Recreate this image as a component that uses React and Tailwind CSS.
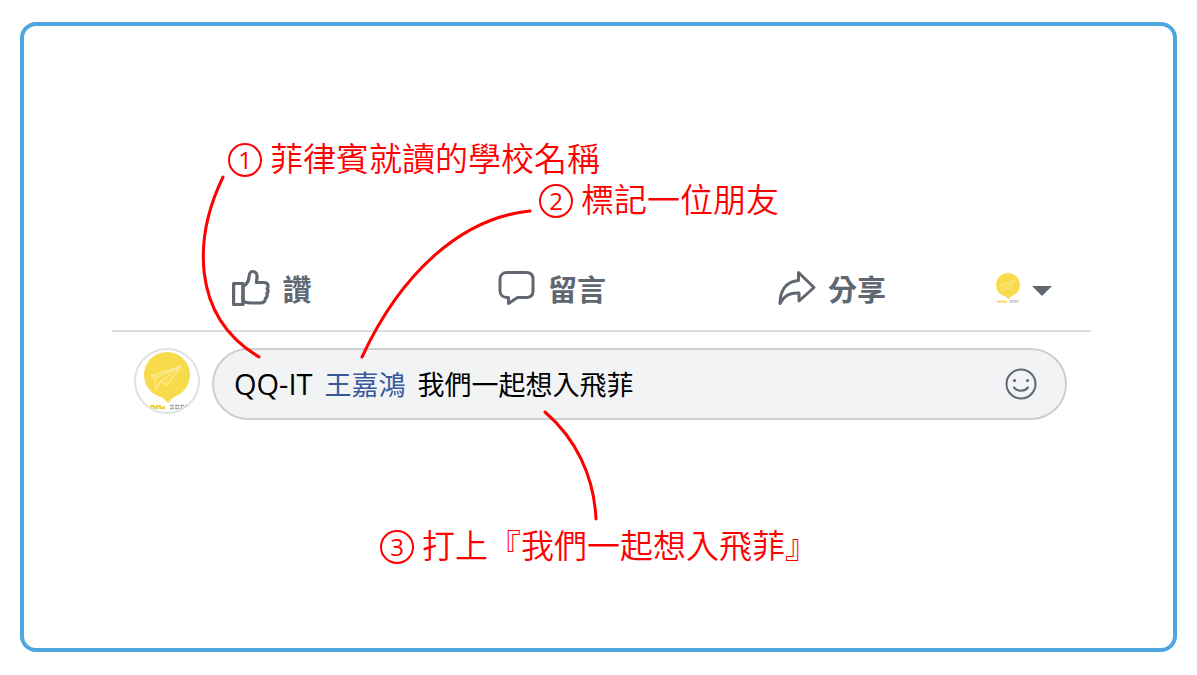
import { useState } from 'react';
import clsx from 'clsx';

const ACTIONS = [
    { label: '讚', Icon: LikeIcon },
    { label: '留言', Icon: CommentIcon },
    { label: '分享', Icon: ShareIcon },
];

function LikeIcon({ className }) {
    return (
        <svg viewBox="0 0 38 38" fill="none" stroke="currentColor" strokeWidth="3.200" strokeLinejoin="round" className={className}>
            <path d="M1.600 14.5h9.400v21h-9.400z" />
            <path d="M11 17.500c3.500-2 5.500-5 6-9 .2-4.500 1-6 3.500-6 3.500 0 5 3 4.500 6.500-.2 2-.6 3-.6 4.500h7c3 0 4.700 1.500 4.700 3.700 0 1-.4 1.800-1 2.300 1.200 1.500 1.200 3.500-.3 5 .7 1.800.2 3.800-1.400 4.800.1 3-1.700 4.700-5.200 4.700h-9c-4 0-5.500-.8-8.200-1.500z" />
        </svg>
    );
}

function CommentIcon({ className }) {
    return (
        <svg viewBox="0 0 38 38" fill="none" stroke="currentColor" strokeWidth="3" strokeLinejoin="round" className={className}>
            <path d="M9 3.500h19c4.500 0 7 2.500 7 6.500v12c0 4-2.500 6.500-7 6.500h-8.500l-9 6v-6h-1.500c-4 0-7-2.500-7-6.500v-12c0-4 3-6.500 7-6.500z" />
        </svg>
    );
}

function ShareIcon({ className }) {
    return (
        <svg viewBox="0 0 38 38" fill="none" stroke="currentColor" strokeWidth="3" strokeLinejoin="round" className={className}>
            <path d="M20.500 3.500l15.500 15-15 13.500v-8c-9-.5-14 2-19 10.500.2-13 6-22 18.500-23z" />
        </svg>
    );
}

function SmileIcon({ className }) {
    return (
        <svg viewBox="0 0 32 32" fill="none" stroke="currentColor" strokeWidth="2" strokeLinecap="round" className={className}>
            <circle cx="16" cy="16" r="14.500" />
            <path d="M9 19.500c3.500 4.200 10.500 4.200 14 0" />
            <circle cx="9.500" cy="12.500" r="1.600" fill="currentColor" stroke="none" />
            <circle cx="22.500" cy="12.500" r="1.600" fill="currentColor" stroke="none" />
        </svg>
    );
}

function BalloonLogo({ className }) {
    return (
        <svg viewBox="0 0 62 62" className={className}>
            <circle cx="31" cy="25" r="23" fill="#f7db4a" />
            <path d="M26 47h12l-6 6z" fill="#f7db4a" />
            <g fill="none" stroke="#fbea8c" strokeWidth="1.500" strokeLinejoin="round">
                <path d="M15 26l30-10-14 19-6-4-5 8-1-11z" />
                <path d="M19 28l26-12-20 15" />
            </g>
            <path d="M9 56h2l1 2h3v-2h3v2h3v-2h3v2h4v-2" fill="none" stroke="#f5d040" strokeWidth="2" />
            <path d="M34 55.500h18M34 58.500h18" stroke="#a3a3a8" strokeWidth="1.500" strokeDasharray="4 1" />
            <path d="M36 57h14" stroke="#b9b9be" strokeWidth="1.500" strokeDasharray="1 2" />
        </svg>
    );
}

function Callout({ number, children, className }) {
    return (
        <div className={clsx('flex items-start gap-2 text-[#ff0000]', className)}>
            <span className="flex size-[34px] shrink-0 items-center justify-center rounded-full border-2 border-[#ff0000] font-['Open_Sans',sans-serif] text-2xl leading-none">
                {number}
            </span>
            <p className="text-[33px] leading-[28px] font-[350]">{children}</p>
        </div>
    );
}

// hand-drawn style lines between the callouts and the comment box
function Pointers() {
    return (
        <svg
            viewBox="0 0 1197 675"
            fill="none"
            stroke="#ff0000"
            strokeWidth="3"
            strokeLinecap="round"
            className="pointer-events-none absolute inset-0 h-full w-full"
        >
            <path d="M223 177C195 235 189 315 259 357" />
            <path d="M530 211C460 218 400 275 362 357" />
            <path d="M545 412C575 438 594 475 596 519" />
        </svg>
    );
}

export default function App() {
    const [liked, setLiked] = useState(false);

    return (
        <main className="relative flex min-h-screen bg-white px-5 pt-[22px] pb-[23px] font-['Noto_Sans_CJK_TC',sans-serif]">
            <section className="flex-1 rounded-2xl border-4 border-[#4fa6de] pt-[117px] pr-[82px] pl-[88px]">
                <div className="flex flex-col gap-[7px]">
                    <Callout number={1} className="pl-[116px]">菲律賓就讀的學校名稱</Callout>
                    <Callout number={2} className="pl-[427px]">標記一位朋友</Callout>
                </div>

                <div className="mt-10 flex items-center border-b-2 border-[#dddddd] pt-2 pb-5 pl-5 text-[#606770]">
                    {ACTIONS.map(({ label, Icon }, i) => (
                        <button
                            key={label}
                            type="button"
                            aria-pressed={i === 0 ? liked : undefined}
                            onClick={i === 0 ? () => setLiked(!liked) : undefined}
                            className="flex flex-1 items-center justify-center gap-3 text-[29px] leading-[44px] font-bold"
                        >
                            <Icon className="size-[38px]" />
                            {label}
                        </button>
                    ))}
                    <div className="flex w-[119px] pl-5">
                        <button type="button" aria-label="切換身分" className="flex items-center gap-2">
                            <BalloonLogo className="size-8" />
                            <svg viewBox="0 0 20 16" className="h-4 w-5 fill-[#606770]">
                                <path d="M0 6h20l-10 10z" />
                            </svg>
                        </button>
                    </div>
                </div>

                <div className="flex items-start gap-3 pt-4 pr-6 pl-[22px]">
                    <div className="flex size-[66px] shrink-0 items-center justify-center overflow-hidden rounded-full border-2 border-[#e0e1e3]">
                        <BalloonLogo className="size-[62px]" />
                    </div>
                    <div className="flex flex-1 items-center rounded-full border-2 border-[#ccced2] bg-[#f2f3f5] py-3 pr-7 pl-5">
                        <div
                            role="textbox"
                            aria-label="留言"
                            contentEditable
                            suppressContentEditableWarning
                            className="flex flex-1 items-baseline gap-3 text-[27px] leading-[44px] text-black outline-none"
                        >
                            <span className="font-['Open_Sans',sans-serif] text-[29px]">QQ-IT</span>
                            <span className="text-[#385898]">王嘉鴻</span>
                            <span>我們一起想入飛菲</span>
                        </div>
                        <button type="button" aria-label="表情符號" className="text-[#606770]">
                            <SmileIcon className="size-8" />
                        </button>
                    </div>
                </div>

                <Callout number={3} className="mt-[110px] pl-[268px]">打上『我們一起想入飛菲』</Callout>
            </section>
            <Pointers />
        </main>
    );
}
